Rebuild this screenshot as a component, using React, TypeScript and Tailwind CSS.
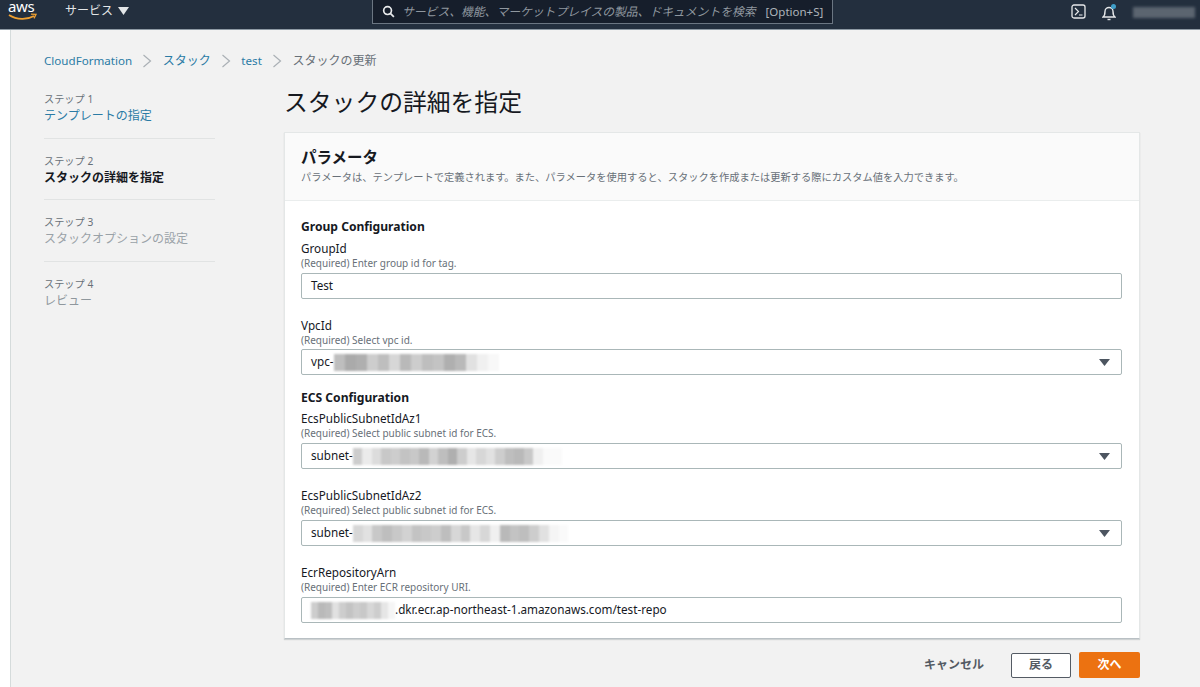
import React from "react";

const FONT = "font-['Noto_Sans','Noto_Sans_CJK_JP',sans-serif]";

function Blur({ cells, w = 7, h = 17 }: { cells: string[]; w?: number; h?: number }) {
  return (
    <span className="flex blur-[1.2px] overflow-hidden" style={{ height: h }}>
      {cells.map((c, i) => (
        <span key={i} className="h-full" style={{ background: c, width: w }} />
      ))}
    </span>
  );
}

const g = (v: number) => `rgb(${v},${v},${v})`;
const seq = (a: number[]) => a.map(g);

function Caret() {
  return (
    <svg width="11" height="7" viewBox="0 0 11 7" className="absolute right-[11px] top-[9px]">
      <path d="M0 0h11L5.500 7z" fill="#4c5560" />
    </svg>
  );
}

function Field({
  label,
  hint,
  select,
  tight,
  className,
  children,
}: {
  label: string;
  hint: string;
  select?: boolean;
  tight?: boolean;
  className?: string;
  children: React.ReactNode;
}) {
  return (
    <div className={className}>
      <div className="text-[11.7px] leading-[16px] text-[#16191f]">{label}</div>
      <div className="text-[10px] leading-[13px] text-[#687078] mt-[1px]">{hint}</div>
      <div
        className={`relative ${tight ? "mt-[2px]" : "mt-[3px]"} h-[26px] border border-[#aab7b8] rounded-[2px] bg-white flex items-center pl-[9px] text-[11.7px] text-[#16191f]`}
      >
        {children}
        {select && <Caret />}
      </div>
    </div>
  );
}

function Step({ n, title, cls, border = true }: { n: number; title: string; cls: string; border?: boolean }) {
  return (
    <div className={`h-[61.5px] pt-[15px] ${border ? "border-b border-[#e1e3e3]" : ""}`}>
      <div className="text-[10.2px] leading-[14px] text-[#687078]">ステップ {n}</div>
      <div className={`text-[12px] leading-[20px] ${cls}`}>{title}</div>
    </div>
  );
}

function Chevron() {
  return (
    <svg width="10" height="14" viewBox="0 0 10 14" className="mx-[10.3px]">
      <path d="M1.500 1l7 6-7 6" fill="none" stroke="#aab0b5" strokeWidth="1.2" />
    </svg>
  );
}

export default function App() {
  return (
    <div className={`${FONT} w-[1200px] h-[687px] overflow-hidden bg-white flex flex-col`}>
      <header className="h-[30px] shrink-0 bg-[#232f3e] border-b border-[#8d99a3] flex items-center relative text-white whitespace-nowrap">
        <div className="w-[44px] ml-[8px] h-full relative shrink-0">
          <span className="absolute left-0 top-0 text-[15px] leading-[12px] tracking-[-0.3px] text-white">aws</span>
          <svg width="30" height="9" viewBox="0 0 30 9" className="absolute left-0 top-[13px]">
            <path d="M1 2c8 5 18 5 25 1" fill="none" stroke="#f0a030" strokeWidth="1.8" />
            <path d="M23 1.200l5 .2-2 4" fill="none" stroke="#f0a030" strokeWidth="1.3" />
          </svg>
        </div>
        <span className="ml-[13px] text-[12px] text-[#e3e6e8] mt-[-8px] shrink-0">サービス</span>
        <svg width="11" height="8" viewBox="0 0 11 8" className="ml-[5px] mt-[-7px] shrink-0">
          <path d="M0 0h11L5.500 8z" fill="#e3e6e8" />
        </svg>
        <div className="ml-[243px] h-[24px] mt-[-5px] w-[461px] shrink-0 bg-[#161e2b] border border-[#6b7682] border-t-0 flex items-center pl-[9px]">
          <svg width="13" height="13" viewBox="0 0 14 14" fill="none" stroke="#e8eaec" strokeWidth="1.8" className="shrink-0">
            <circle cx="6" cy="6" r="4.200" />
            <path d="M9 9l3.800 3.800" />
          </svg>
          <span className="ml-[7px] text-[11.8px] italic text-[#8f979f]">サービス、機能、マーケットプレイスの製品、ドキュメントを検索</span>
          <span className="ml-[10px] text-[11.5px] text-[#aeb4ba]">[Option+S]</span>
        </div>
        <svg width="16" height="16" viewBox="0 0 16 16" fill="none" stroke="#e6e8ea" className="ml-[238px] mt-[-5px] shrink-0">
          <rect x="1" y="1" width="13" height="13" rx="2" strokeWidth="1.3" />
          <path d="M4 4l3.500 3.500L4 11M8 11h3.500" strokeWidth="1.2" />
        </svg>
        <div className="relative ml-[15px] mt-[-4px] w-[16px] h-[16px] shrink-0">
          <svg width="14" height="16" viewBox="0 0 14 16" fill="none" stroke="#e6e8ea" strokeWidth="1.4">
            <path d="M1 12c2-1.500 2-3 2-5.500C3 4 5 2.500 7 2.500s4 1.500 4 4c0 2.500 0 4 2 5.500z" />
            <path d="M5.500 14.500h3" />
          </svg>
          <span className="absolute left-[9px] top-[-1px] w-[5px] h-[5px] rounded-full bg-[#3f9fc9]" />
        </div>
        <div className="ml-[15px] mt-[-4px] w-[62px] h-[11px] bg-[#5b6570] blur-[1.5px] shrink-0" />
      </header>

      <div className="flex-1 ml-[10px] bg-[#f2f2f2] border-l border-[#d5dbdb] pl-[33px] pr-[60px] min-h-0">
        <nav className="flex items-center h-[18px] mt-[22px] text-[11.6px] whitespace-nowrap">
          <span className="text-[#2a7ba5]">CloudFormation</span>
          <Chevron />
          <span className="text-[#2a7ba5] text-[12px]">スタック</span>
          <Chevron />
          <span className="text-[#2a7ba5]">test</span>
          <Chevron />
          <span className="text-[#687078] text-[12px]">スタックの更新</span>
        </nav>

        <div className="flex mt-[6px]">
          <aside className="w-[171px] shrink-0 mt-[1px]">
            <Step n={1} title="テンプレートの指定" cls="text-[#2a7ba5]" />
            <Step n={2} title="スタックの詳細を指定" cls="font-bold text-[#16191f]" />
            <Step n={3} title="スタックオプションの設定" cls="text-[#9aa2a8]" />
            <Step n={4} title="レビュー" cls="text-[#8f979d]" border={false} />
          </aside>

          <main className="ml-[69px] flex-1 min-w-0">
            <h1 className="text-[23.800px] leading-[32px] font-normal text-[#16191f] mt-[10px]">スタックの詳細を指定</h1>

            <section className="mt-[14px] h-[507px] bg-white border border-[#e4e7e7] border-b-[#b9c0c4] shadow-[0_1px_1px_rgba(0,28,36,0.15)]">
              <div className="h-[68px] bg-[#fafafa] border-b border-[#eaeded] pl-[16px] pt-[13px]">
                <div className="text-[15.500px] leading-[22px] font-bold text-[#16191f]">パラメータ</div>
                <div className="text-[10.260px] leading-[15px] text-[#687078] mt-[2px]">
                  パラメータは、テンプレートで定義されます。また、パラメータを使用すると、スタックを作成または更新する際にカスタム値を入力できます。
                </div>
              </div>
              <div className="pl-[16px] pr-[17px] pt-[17px]">
                <div className="text-[12.100px] leading-[18px] font-bold text-[#16191f]">Group Configuration</div>
                <Field label="GroupId" hint="(Required) Enter group id for tag." className="mt-[4px]">
                  <span>Test</span>
                </Field>
                <Field label="VpcId" hint="(Required) Select vpc id." select tight className="mt-[18px]">
                  <span>vpc-</span>
                  <Blur w={11} cells={seq([190, 170, 175, 205, 190, 215, 185, 205, 190, 195, 175, 185, 225, 240, 248])} />
                </Field>
                <div className="text-[12.100px] leading-[18px] font-bold text-[#16191f] mt-[14px]">ECS Configuration</div>
                <Field label="EcsPublicSubnetIdAz1" hint="(Required) Select public subnet id for ECS." select className="mt-[3px]">
                  <span>subnet-</span>
                  <Blur w={9.500} cells={seq([205, 235, 220, 200, 205, 195, 200, 185, 210, 190, 175, 205, 230, 215, 225, 205, 190, 185, 200, 240, 250, 250])} />
                </Field>
                <Field label="EcsPublicSubnetIdAz2" hint="(Required) Select public subnet id for ECS." select className="mt-[18px]">
                  <span>subnet-</span>
                  <Blur w={9.800} cells={seq([215, 225, 200, 190, 200, 210, 195, 200, 205, 190, 215, 200, 230, 215, 240, 185, 195, 190, 205, 225, 245, 250])} />
                </Field>
                <Field label="EcrRepositoryArn" hint="(Required) Enter ECR repository URI." className="mt-[18px]">
                  <Blur cells={seq([205, 185, 190, 225, 205, 195, 205, 200, 215, 205, 230, 245])} />
                  <span>.dkr.ecr.ap-northeast-1.amazonaws.com/test-repo</span>
                </Field>
              </div>
            </section>

            <div className="flex items-center justify-end mt-[13px] text-[12px] font-bold">
              <span className="text-[#545b64] mr-[27px]">キャンセル</span>
              <button className="w-[60px] h-[25px] bg-white border border-[#545b64] rounded-[2px] text-[#545b64] mr-[8px]">戻る</button>
              <button className="w-[61px] h-[26px] bg-[#ec7211] rounded-[2px] text-white">次へ</button>
            </div>
          </main>
        </div>
      </div>
    </div>
  );
}
